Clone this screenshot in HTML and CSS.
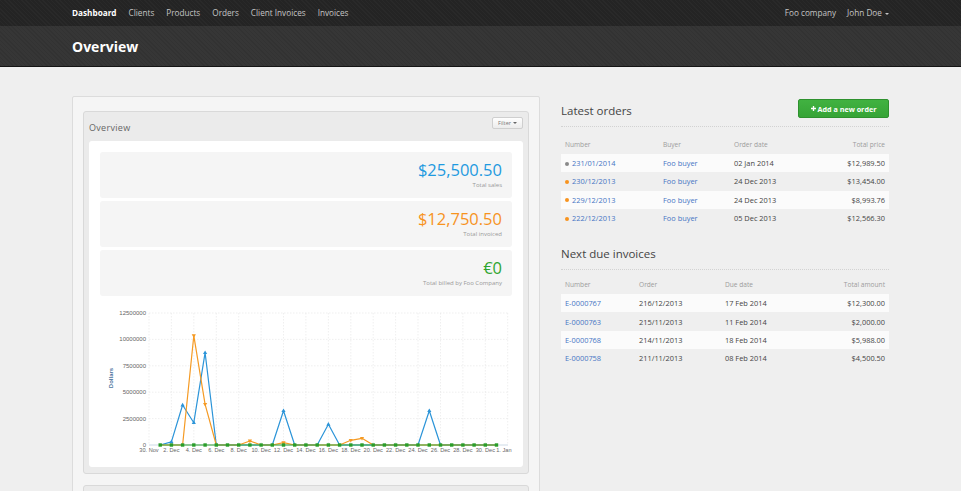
FILE: index.html
```html
<!DOCTYPE html>
<html lang="en">
<head>
<meta charset="utf-8">
<title>Overview</title>
<link rel="stylesheet" href="styles.css">
</head>
<body>
<nav class="navbar">
  <div class="container nav-inner">
    <ul class="nav-list">
      <li class="active">Dashboard</li>
      <li>Clients</li>
      <li>Products</li>
      <li>Orders</li>
      <li>Client Invoices</li>
      <li>Invoices</li>
    </ul>
    <ul class="nav-list nav-right">
      <li>Foo company</li>
      <li>John Doe <span class="caret"></span></li>
    </ul>
  </div>
</nav>
<header class="page-header">
  <div class="container"><h1>Overview</h1></div>
</header>
<main class="container content">
  <section class="left-col">
    <div class="panel">
      <div class="panel-head">
        <span class="panel-title">Overview</span>
        <button class="btn-filter">Filter <span class="caret-dark"></span></button>
      </div>
      <div class="panel-body">
        <div class="stat"><div class="stat-value blue">$25,500.50</div><div class="stat-label">Total sales</div></div>
        <div class="stat"><div class="stat-value orange">$12,750.50</div><div class="stat-label">Total invoiced</div></div>
        <div class="stat"><div class="stat-value green">€0</div><div class="stat-label">Total billed by Foo Company</div></div>
        <svg class="chart" width="412" height="157" viewBox="0 0 412 157">
          <g class="grid">
            <line x1="49" y1="14" x2="408" y2="14"/>
            <line x1="49" y1="40.4" x2="408" y2="40.4"/>
            <line x1="49" y1="66.8" x2="408" y2="66.8"/>
            <line x1="49" y1="93.2" x2="408" y2="93.2"/>
            <line x1="49" y1="119.6" x2="408" y2="119.6"/>
            <line x1="49" y1="14" x2="49" y2="146"/>
            <line x1="71.4" y1="14" x2="71.4" y2="146"/>
            <line x1="93.8" y1="14" x2="93.8" y2="146"/>
            <line x1="116.3" y1="14" x2="116.3" y2="146"/>
            <line x1="138.7" y1="14" x2="138.7" y2="146"/>
            <line x1="161.1" y1="14" x2="161.1" y2="146"/>
            <line x1="183.5" y1="14" x2="183.5" y2="146"/>
            <line x1="205.9" y1="14" x2="205.9" y2="146"/>
            <line x1="228.4" y1="14" x2="228.4" y2="146"/>
            <line x1="250.8" y1="14" x2="250.8" y2="146"/>
            <line x1="273.2" y1="14" x2="273.2" y2="146"/>
            <line x1="295.6" y1="14" x2="295.6" y2="146"/>
            <line x1="318" y1="14" x2="318" y2="146"/>
            <line x1="340.5" y1="14" x2="340.5" y2="146"/>
            <line x1="362.9" y1="14" x2="362.9" y2="146"/>
            <line x1="385.3" y1="14" x2="385.3" y2="146"/>
            <line x1="407.7" y1="14" x2="407.7" y2="146"/>
          </g>
          <line class="axis" x1="49" y1="146" x2="408" y2="146"/>
          <g class="ylabels">
            <text x="46" y="16">12500000</text>
            <text x="46" y="42.4">10000000</text>
            <text x="46" y="68.8">7500000</text>
            <text x="46" y="95.2">5000000</text>
            <text x="46" y="121.6">2500000</text>
            <text x="46" y="148">0</text>
          </g>
          <text class="ytitle" transform="translate(12.5 79) rotate(-90)">Dollars</text>
          <g class="xlabels">
            <text x="49" y="153">30. Nov</text>
            <text x="71.4" y="153">2. Dec</text>
            <text x="93.8" y="153">4. Dec</text>
            <text x="116.3" y="153">6. Dec</text>
            <text x="138.7" y="153">8. Dec</text>
            <text x="161.1" y="153">10. Dec</text>
            <text x="183.5" y="153">12. Dec</text>
            <text x="205.9" y="153">14. Dec</text>
            <text x="228.4" y="153">16. Dec</text>
            <text x="250.8" y="153">18. Dec</text>
            <text x="273.2" y="153">20. Dec</text>
            <text x="295.6" y="153">22. Dec</text>
            <text x="318" y="153">24. Dec</text>
            <text x="340.5" y="153">26. Dec</text>
            <text x="362.9" y="153">28. Dec</text>
            <text x="385.3" y="153">30. Dec</text>
            <text class="last" x="411.5" y="153">1. Jan</text>
          </g>
          <polyline class="s-blue" points="60.2,146 71.4,142.8 82.6,106 93.8,123.7 105.1,53.7 116.3,146 127.5,146 138.7,146 149.9,146 161.1,146 172.3,146 183.5,111.7 194.7,146 205.9,146 217.2,146 228.4,125.3 239.6,146 250.8,146 262,146 273.2,146 284.4,146 295.6,146 306.8,146 318,146 329.3,111.7 340.5,146 351.7,146 362.9,146 374.1,146 385.3,146 396.5,146"/>
          <g class="m-blue">
            <path d="M71.4 140.6l2.1 3.6h-4.2z"/>
            <path d="M82.6 103.8l2.1 3.6h-4.2z"/>
            <path d="M93.8 121.5l2.1 3.6h-4.2z"/>
            <path d="M105.1 51.5l2.1 3.6h-4.2z"/>
            <path d="M183.5 109.5l2.1 3.6h-4.2z"/>
            <path d="M228.4 123.1l2.1 3.6h-4.2z"/>
            <path d="M329.3 109.5l2.1 3.6h-4.2z"/>
          </g>
          <polyline class="s-orange" points="60.2,146 71.4,146 82.6,146 93.8,36.7 105.1,105.3 116.3,146 127.5,146 138.7,146 149.9,142 161.1,146 172.3,146 183.5,143.7 194.7,146 205.9,146 217.2,146 228.4,146 239.6,146 250.8,141.3 262,139.3 273.2,146 284.4,146 295.6,146 306.8,146 318,146 329.3,146 340.5,146 351.7,146 362.9,146 374.1,146 385.3,146 396.5,146"/>
          <g class="m-orange">
            <path d="M93.8 38.9l2.1 -3.6h-4.2z"/>
            <path d="M105.1 107.5l2.1 -3.6h-4.2z"/>
            <path d="M149.9 144.2l2.1 -3.6h-4.2z"/>
            <path d="M183.5 145.9l2.1 -3.6h-4.2z"/>
            <path d="M250.8 143.5l2.1 -3.6h-4.2z"/>
            <path d="M262 141.5l2.1 -3.6h-4.2z"/>
          </g>
          <line class="s-green" x1="60.2" y1="146" x2="396.5" y2="146"/>
          <g class="m-green">
            <rect x="58.5" y="144.3" width="3.4" height="3.4"/>
            <rect x="69.7" y="144.3" width="3.4" height="3.4"/>
            <rect x="80.9" y="144.3" width="3.4" height="3.4"/>
            <rect x="92.1" y="144.3" width="3.4" height="3.4"/>
            <rect x="103.4" y="144.3" width="3.4" height="3.4"/>
            <rect x="114.6" y="144.3" width="3.4" height="3.4"/>
            <rect x="125.8" y="144.3" width="3.4" height="3.4"/>
            <rect x="137" y="144.3" width="3.4" height="3.4"/>
            <rect x="148.2" y="144.3" width="3.4" height="3.4"/>
            <rect x="159.4" y="144.3" width="3.4" height="3.4"/>
            <rect x="170.6" y="144.3" width="3.4" height="3.4"/>
            <rect x="181.8" y="144.3" width="3.4" height="3.4"/>
            <rect x="193" y="144.3" width="3.4" height="3.4"/>
            <rect x="204.2" y="144.3" width="3.4" height="3.4"/>
            <rect x="215.5" y="144.3" width="3.4" height="3.4"/>
            <rect x="226.7" y="144.3" width="3.4" height="3.4"/>
            <rect x="237.9" y="144.3" width="3.4" height="3.4"/>
            <rect x="249.1" y="144.3" width="3.4" height="3.4"/>
            <rect x="260.3" y="144.3" width="3.4" height="3.4"/>
            <rect x="271.5" y="144.3" width="3.4" height="3.4"/>
            <rect x="282.7" y="144.3" width="3.4" height="3.4"/>
            <rect x="293.9" y="144.3" width="3.4" height="3.4"/>
            <rect x="305.1" y="144.3" width="3.4" height="3.4"/>
            <rect x="316.3" y="144.3" width="3.4" height="3.4"/>
            <rect x="327.6" y="144.3" width="3.4" height="3.4"/>
            <rect x="338.8" y="144.3" width="3.4" height="3.4"/>
            <rect x="350" y="144.3" width="3.4" height="3.4"/>
            <rect x="361.2" y="144.3" width="3.4" height="3.4"/>
            <rect x="372.4" y="144.3" width="3.4" height="3.4"/>
            <rect x="383.6" y="144.3" width="3.4" height="3.4"/>
            <rect x="394.8" y="144.3" width="3.4" height="3.4"/>
          </g>
        </svg>
      </div>
    </div>
    <div class="panel panel-next"></div>
  </section>

  <section class="right-col">
    <div class="block">
      <div class="block-head">
        <h2>Latest orders</h2>
        <button class="btn-add"><svg class="plus" width="6" height="6" viewBox="0 0 6 6"><path d="M2.2 0h1.6v2.2H6v1.6H3.8V6H2.2V3.8H0V2.2h2.2z"/></svg>Add a new order</button>
      </div>
      <table class="list orders">
        <thead>
          <tr><th>Number</th><th>Buyer</th><th>Order date</th><th class="num">Total price</th></tr>
        </thead>
        <tbody>
          <tr><td><span class="dot grey"></span><a>231/01/2014</a></td><td><a>Foo buyer</a></td><td>02 Jan 2014</td><td class="num">$12,989.50</td></tr>
          <tr><td><span class="dot orange-bg"></span><a>230/12/2013</a></td><td><a>Foo buyer</a></td><td>24 Dec 2013</td><td class="num">$13,454.00</td></tr>
          <tr><td><span class="dot orange-bg"></span><a>229/12/2013</a></td><td><a>Foo buyer</a></td><td>24 Dec 2013</td><td class="num">$8,993.76</td></tr>
          <tr><td><span class="dot orange-bg"></span><a>222/12/2013</a></td><td><a>Foo buyer</a></td><td>05 Dec 2013</td><td class="num">$12,566.30</td></tr>
        </tbody>
      </table>
    </div>
    <div class="block block-invoices">
      <div class="block-head">
        <h2>Next due invoices</h2>
      </div>
      <table class="list invoices">
        <thead>
          <tr><th>Number</th><th>Order</th><th>Due date</th><th class="num">Total amount</th></tr>
        </thead>
        <tbody>
          <tr><td><a>E-0000767</a></td><td>216/12/2013</td><td>17 Feb 2014</td><td class="num">$12,300.00</td></tr>
          <tr><td><a>E-0000763</a></td><td>215/11/2013</td><td>11 Feb 2014</td><td class="num">$2,000.00</td></tr>
          <tr><td><a>E-0000768</a></td><td>214/11/2013</td><td>18 Feb 2014</td><td class="num">$5,988.00</td></tr>
          <tr><td><a>E-0000758</a></td><td>211/11/2013</td><td>08 Feb 2014</td><td class="num">$4,500.50</td></tr>
        </tbody>
      </table>
    </div>
  </section>
</main>
</body>
</html>
```
FILE: styles.css
```css
* { box-sizing: border-box; }

html, body { height: 100%; }

body {
  margin: 0;
  background: #efefef;
  font-family: "Open Sans", "DejaVu Sans", sans-serif;
  color: #444;
  overflow: hidden;
}

.container {
  width: 817px;
  margin: 0 auto;
}

/* navbar */
.navbar {
  height: 26px;
  background-color: #242424;
  background-image: repeating-linear-gradient(45deg, rgba(255,255,255,0.025) 0 1px, transparent 1px 3px);
}

.nav-inner {
  display: flex;
  justify-content: space-between;
  align-items: center;
  height: 26px;
}

.nav-list {
  display: flex;
  gap: 12px;
  list-style: none;
  margin: 0;
  padding: 0;
  font-size: 8.2px;
  line-height: 26px;
  color: #c4c4c4;
}

.nav-list .active {
  color: #fff;
  font-weight: 700;
}

.nav-right { gap: 11px; }

.caret {
  display: inline-block;
  width: 0;
  height: 0;
  margin-left: 1px;
  vertical-align: middle;
  border-left: 2px solid transparent;
  border-right: 2px solid transparent;
  border-top: 2px solid #c4c4c4;
}

/* page header */
.page-header {
  height: 41px;
  background-color: #363636;
  background-image: repeating-linear-gradient(45deg, rgba(0,0,0,0.08) 0 1px, transparent 1px 3px);
  border-bottom: 1px solid #141414;
}

.page-header h1 {
  margin: 0;
  padding-top: 2px;
  font-size: 14px;
  line-height: 38px;
  font-weight: 700;
  color: #fff;
}

/* content */
.content {
  display: flex;
  gap: 21px;
  align-items: flex-start;
  margin-top: 29px;
}

.left-col {
  width: 468px;
  flex: none;
  background: #f5f5f5;
  border: 1px solid #dcdcdc;
  border-radius: 2px;
  padding: 14px 10px 0;
}

.panel {
  background: #ebebeb;
  border: 1px solid #d9d9d9;
  border-radius: 3px;
  padding: 0 5px 6px;
}

.panel-next {
  margin-top: 11px;
  height: 40px;
}

.panel-head {
  display: flex;
  justify-content: space-between;
  align-items: flex-start;
  height: 29px;
  padding-top: 5px;
}

.panel-title {
  margin-top: 5px;
  font-size: 9px;
  line-height: 12px;
  letter-spacing: 0.3px;
  color: #666;
}

.btn-filter {
  height: 12px;
  padding: 0 5px;
  font-family: inherit;
  font-size: 5.5px;
  color: #777;
  background: linear-gradient(#fefefe, #ececec);
  border: 1px solid #cfcfcf;
  border-radius: 2px;
  display: flex;
  align-items: center;
  gap: 2px;
}

.caret-dark {
  display: inline-block;
  width: 0;
  height: 0;
  border-left: 2px solid transparent;
  border-right: 2px solid transparent;
  border-top: 2px solid #666;
}

.panel-body {
  background: #fff;
  border-radius: 3px;
  padding: 11px;
}

.stat {
  height: 46px;
  margin-bottom: 3px;
  padding: 6px 10px 0;
  background: #f5f5f5;
  border-radius: 3px;
  text-align: right;
}

.stat-value {
  font-size: 16.5px;
  line-height: 23px;
}

.stat-label {
  font-size: 6px;
  line-height: 8px;
  color: #999;
}

.blue { color: #1f9ae0; }
.orange { color: #f7931e; }
.green { color: #2fa52f; }

/* chart */
.chart {
  display: block;
  font-family: "Liberation Sans", Arial, sans-serif;
}

.chart .grid line {
  stroke: #e4e4e4;
  stroke-width: 0.6;
  stroke-dasharray: 1.5 1.5;
}

.chart .axis {
  stroke: #c0d0e0;
  stroke-width: 0.8;
}

.chart .ylabels text {
  font-size: 6px;
  fill: #666;
  text-anchor: end;
}

.chart .xlabels text {
  font-size: 5.6px;
  fill: #666;
  text-anchor: middle;
}

.chart .xlabels .last { text-anchor: end; }

.chart .ytitle {
  font-size: 6px;
  font-weight: 700;
  fill: #4d759e;
  text-anchor: middle;
}

.s-blue, .s-orange, .s-green {
  fill: none;
  stroke-width: 1.2;
  stroke-linejoin: round;
}

.s-blue { stroke: #2b94d8; }
.s-orange { stroke: #f59a23; }
.s-green { stroke: #36a536; }

.m-blue path { fill: #2b94d8; }
.m-orange path { fill: #f59a23; }
.m-green rect { fill: #2a9d2a; }

/* right column */
.right-col {
  width: 328px;
  flex: none;
}

.block-head {
  display: flex;
  justify-content: space-between;
  align-items: flex-end;
  min-height: 31px;
  padding: 3px 0 8px;
  border-bottom: 1px dotted #d2d2d2;
}

.block-head h2 {
  margin: 0;
  font-size: 11.5px;
  line-height: 14px;
  font-weight: 400;
  letter-spacing: 0;
  color: #444;
}

.btn-add {
  width: 91px;
  height: 19px;
  display: flex;
  align-items: center;
  justify-content: center;
  gap: 2px;
  padding: 0;
  font-family: inherit;
  font-size: 7.2px;
  font-weight: 700;
  color: #fff;
  background: linear-gradient(#41b241, #36a436);
  border: 1px solid #2e912e;
  border-radius: 2px;
}

.plus { fill: #fff; width: 5px; height: 5px; }

.block-invoices { margin-top: 12px; }

.list {
  width: 100%;
  border-collapse: collapse;
  margin-top: 8px;
  font-size: 7.4px;
}

.block-invoices .list { margin-top: 5px; }

.list th {
  height: 19px;
  padding: 0 4px;
  font-size: 6.6px;
  font-weight: 400;
  color: #9c9c9c;
  text-align: left;
}

.list td {
  height: 18.3px;
  padding: 0 4px;
  color: #444;
  white-space: nowrap;
}

.list tbody tr:nth-child(odd) td { background: #fbfbfb; }

.list .num { text-align: right; }

.list a { color: #4675c4; }

.orders th:nth-child(1) { width: 98px; }
.orders th:nth-child(2) { width: 71px; }
.orders th:nth-child(3) { width: 80px; }

.invoices th:nth-child(1) { width: 74px; }
.invoices th:nth-child(2) { width: 86px; }
.invoices th:nth-child(3) { width: 80px; }

.dot {
  display: inline-block;
  width: 4px;
  height: 4px;
  border-radius: 50%;
  margin-right: 3px;
  vertical-align: 0.5px;
}

.dot.grey { background: #8a8a8a; }
.dot.orange-bg { background: #f7931e; }
```
